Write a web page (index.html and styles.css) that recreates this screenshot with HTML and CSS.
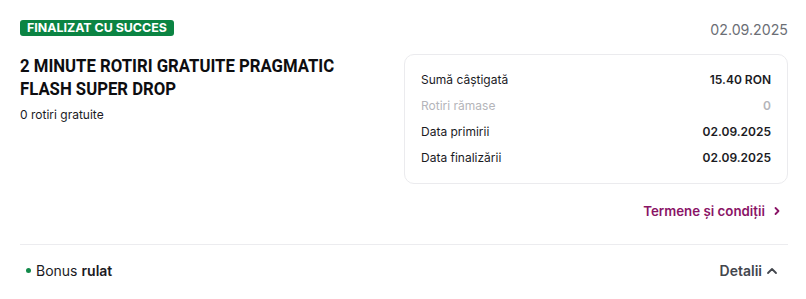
FILE: index.html
```html
<!DOCTYPE html>
<html lang="ro">
<head>
<meta charset="utf-8">
<title>Bonus</title>
<link rel="stylesheet" href="styles.css">
</head>
<body>
<div class="page">
  <div class="top">
    <span class="badge">FINALIZAT CU SUCCES</span>
    <span class="date">02.09.2025</span>
  </div>
  <div class="main">
    <div class="info">
      <h1 class="title">2 MINUTE ROTIRI GRATUITE PRAGMATIC FLASH SUPER DROP</h1>
      <p class="sub">0 rotiri gratuite</p>
    </div>
    <div class="card">
      <div class="row"><span>Sumă câștigată</span><b>15.40 RON</b></div>
      <div class="row muted"><span>Rotiri rămase</span><b>0</b></div>
      <div class="row"><span>Data primirii</span><b>02.09.2025</b></div>
      <div class="row"><span>Data finalizării</span><b>02.09.2025</b></div>
    </div>
  </div>
  <div class="links">
    <a class="terms">Termene și condiții
      <svg class="chev" width="10" height="10" viewBox="0 0 10 10"><path d="M3.5 2 L6.5 5 L3.5 8" fill="none" stroke="currentColor" stroke-width="1.8" stroke-linecap="round" stroke-linejoin="round"/></svg>
    </a>
  </div>
  <div class="footer">
    <div class="status"><span class="dot"></span>Bonus <b>rulat</b></div>
    <div class="details">Detalii
      <svg class="up" width="12" height="12" viewBox="0 0 12 12"><path d="M2 8 L6 4 L10 8" fill="none" stroke="currentColor" stroke-width="1.8" stroke-linecap="round" stroke-linejoin="round"/></svg>
    </div>
  </div>
</div>
</body>
</html>
```

FILE: styles.css
```css
* { box-sizing: border-box; }
body {
  margin: 0;
  background: #ffffff;
  font-family: Inter, "Noto Sans", sans-serif;
  color: #1b1b1f;
}
.page {
  padding: 19px 18px 0 20px;
}
.top {
  display: flex;
  justify-content: space-between;
  align-items: center;
  height: 18px;
}
.badge {
  background: #0b8443;
  color: #ffffff;
  font-family: Inter, sans-serif;
  font-weight: 700;
  font-size: 12.4px;
  line-height: 16px;
  padding: 0 7px;
  border-radius: 3px;
}
.date {
  font-size: 14.2px;
  color: #6b6e75;
  margin-top: 2px;
}
.main {
  display: flex;
  justify-content: space-between;
  align-items: flex-start;
  margin-top: 17px;
}
.title {
  margin: 0;
  font-family: Roboto, "Liberation Sans", sans-serif;
  font-weight: 700;
  font-size: 19px;
  line-height: 23px;
  width: 360px;
  color: #0d0d10;
  transform: scaleX(0.88);
  transform-origin: left top;
}
.sub {
  margin: 7px 0 0;
  font-size: 12px;
  line-height: 16px;
}
.card {
  width: 384px;
  flex: none;
  border: 1px solid #ebebee;
  border-radius: 10px;
  padding: 12px 16px 12px 16px;
}
.row {
  display: flex;
  justify-content: space-between;
  font-size: 12px;
  line-height: 26px;
  height: 26px;
}
.row b { font-weight: 600; font-size: 12px; }
.row.muted { color: #b4b5ba; }
.links {
  display: flex;
  justify-content: flex-end;
  margin-top: 18px;
  padding-right: 6px;
}
.terms {
  color: #8a1466;
  font-weight: 600;
  font-size: 13.3px;
  line-height: 18px;
  display: flex;
  align-items: center;
  gap: 7px;
}
.footer {
  margin-top: 24px;
  border-top: 1px solid #ececef;
  display: flex;
  justify-content: space-between;
  align-items: center;
  height: 52px;
  padding: 0 10px 0 6px;
}
.status {
  display: flex;
  align-items: center;
  font-size: 14px;
}
.status b { font-weight: 600; margin-left: 4px; }
.dot {
  width: 5px;
  height: 5px;
  border-radius: 50%;
  background: #128a4a;
  margin-right: 5px;
}
.details {
  display: flex;
  align-items: center;
  gap: 4px;
  color: #43464d;
  font-weight: 600;
  font-size: 14px;
}
```
